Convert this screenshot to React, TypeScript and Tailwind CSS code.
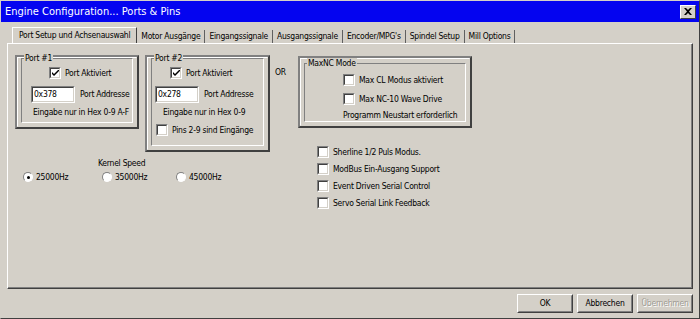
import React from "react";

const font = { fontFamily: '"DejaVu Sans Condensed", "Liberation Sans", sans-serif' };

function CheckBox({ checked = false }: { checked?: boolean }) {
  return (
    <span className="inline-flex h-[12px] w-[12px] shrink-0 border border-t-[#808080] border-l-[#808080] border-r-white border-b-white">
      <span className="flex h-full w-full items-center justify-center border border-t-[#404040] border-l-[#404040] border-r-[#d4d0c8] border-b-[#d4d0c8] bg-white">
        {checked ? (
          <svg width="7" height="7" viewBox="0 0 7 7">
            <path d="M0 2 L0 4 L2 6 L7 1 L7 -1 L2 4 Z" fill="#000" />
          </svg>
        ) : null}
      </span>
    </span>
  );
}

function Check({ label, checked = false }: { label: string; checked?: boolean }) {
  return (
    <label className="flex h-[12px] items-center gap-[4px]">
      <CheckBox checked={checked} />
      <span>{label}</span>
    </label>
  );
}

function Radio({ label, checked = false }: { label: string; checked?: boolean }) {
  return (
    <label className="flex h-[12px] items-center gap-[3px]">
      <span className="flex h-[10px] w-[10px] items-center justify-center rounded-full border border-t-[#808080] border-l-[#808080] border-r-white border-b-white bg-white">
        {checked ? <span className="h-[3px] w-[3px] rounded-full bg-black" /> : null}
      </span>
      <span>{label}</span>
    </label>
  );
}

function Frame({
  title,
  className,
  lineClass,
  children
}: {
  title: string;
  className: string;
  lineClass: string;
  children: React.ReactNode;
}) {
  return (
    <div className={`border-2 border-t-[#808080] border-l-[#808080] border-r-[#404040] border-b-[#404040] ${className}`}>
      <div className="flex h-full flex-col border border-t-white border-l-white border-r-[#d4d0c8] border-b-[#d4d0c8]">
        <div className={`relative mx-[3px] mb-[3px] flex-1 border border-t-[#808080] border-l-[#808080] border-r-white border-b-white ${lineClass}`}>
          <span className="absolute -top-[6px] left-[2px] bg-[#d4d0c8] px-[1px] leading-[11px]">{title}</span>
          {children}
        </div>
      </div>
    </div>
  );
}

function PortInput({ value }: { value: string }) {
  return (
    <div className="h-[17px] w-[44px] shrink-0 border border-t-[#808080] border-l-[#808080] border-r-white border-b-white">
      <div className="flex h-full items-center border border-t-[#404040] border-l-[#404040] border-r-[#d4d0c8] border-b-[#d4d0c8] bg-white pl-[1px]">
        {value}
      </div>
    </div>
  );
}

function Button({ label, disabled = false }: { label: string; disabled?: boolean }) {
  return (
    <div className="h-[19px] w-[56px] border border-t-white border-l-white border-r-[#404040] border-b-[#404040]">
      <div
        className={`flex h-full items-center justify-center border border-t-[#d4d0c8] border-l-[#d4d0c8] border-r-[#808080] border-b-[#808080] ${
          disabled ? "text-[#a09c94] [text-shadow:1px_1px_0_#fff]" : ""
        }`}
      >
        {label}
      </div>
    </div>
  );
}

const tabs = ["Motor Ausgänge", "Eingangssignale", "Ausgangssignale", "Encoder/MPG's", "Spindel Setup", "Mill Options"];

export default function App() {
  return (
    <div
      style={font}
      className="flex h-[319px] w-[700px] flex-col border border-t-[#d4d0c8] border-l-[#d4d0c8] border-r-[#404040] border-b-[#404040] bg-[#d4d0c8] text-[8.5px] leading-[11px] tracking-[-0.25px] whitespace-nowrap text-black"
    >
      <div className="flex h-[21px] items-center justify-between bg-[#0404f0] pl-[4px] pr-[3px]">
        <span className="text-[11px] tracking-normal text-white">Engine Configuration... Ports &amp; Pins</span>
        <span className="flex h-[14px] w-[16px] items-center justify-center border border-t-white border-l-white border-r-[#404040] border-b-[#404040] bg-[#d4d0c8]">
          <svg width="8" height="7" viewBox="0 0 8 7">
            <path d="M0 0 L2 0 L4 2 L6 0 L8 0 L5 3.5 L8 7 L6 7 L4 5 L2 7 L0 7 L3 3.5 Z" fill="#000" />
          </svg>
        </span>
      </div>

      <div className="flex flex-1 flex-col px-[6px] pt-[5px]">
        <div className="flex h-[16px] items-end pl-[5px]">
          <div className="flex h-[16px] items-center border border-b-0 border-t-white border-l-white border-r-[#404040] px-[6px]">
            Port Setup und Achsenauswahl
          </div>
          {tabs.map((t) => (
            <div key={t} className="flex h-[13px] items-center border-r border-r-[#606060] px-[4px]">
              {t}
            </div>
          ))}
        </div>

        <div className="flex h-[246px] border border-t-white border-l-white border-r-[#404040] border-b-[#404040]">
          <div className="flex h-full w-full border-r border-b border-r-[#808080] border-b-[#808080] pl-[7px] pt-[11px]">
            <div className="flex w-[255px] flex-col">
              <div className="flex items-start gap-[6px]">
                <Frame title="Port #1" className="h-[74px] w-[124px]" lineClass="mt-0">
                  <div className="flex flex-col pt-[8px]">
                    <div className="pl-[27px]">
                      <Check label="Port Aktiviert" checked />
                    </div>
                    <div className="mt-[7px] flex items-center gap-[5px] pl-[9px]">
                      <PortInput value="0x378" />
                      <span>Port Addresse</span>
                    </div>
                    <div className="mt-[4px] pl-[11px]">Eingabe nur in Hex 0-9 A-F</div>
                  </div>
                </Frame>
                <Frame title="Port #2" className="h-[97px] w-[125px]" lineClass="mt-0">
                  <div className="flex flex-col pt-[8px]">
                    <div className="pl-[18px]">
                      <Check label="Port Aktiviert" checked />
                    </div>
                    <div className="mt-[7px] flex items-center gap-[5px] pl-[3px]">
                      <PortInput value="0x278" />
                      <span>Port Addresse</span>
                    </div>
                    <div className="mt-[4px] pl-[11px]">Eingabe nur in Hex 0-9</div>
                    <div className="mt-[6px] pl-[4px]">
                      <Check label="Pins 2-9 sind Eingänge" />
                    </div>
                  </div>
                </Frame>
              </div>
              <div className="mt-[6px] pl-[83px]">Kernel Speed</div>
              <div className="mt-[2px] flex pl-[8px]">
                <div className="w-[79px]">
                  <Radio label="25000Hz" checked />
                </div>
                <div className="w-[74px]">
                  <Radio label="35000Hz" />
                </div>
                <Radio label="45000Hz" />
              </div>
            </div>
            <div className="ml-[5px] w-[23px] pt-[12px]">OR</div>
            <div className="flex flex-col">
              <Frame title="MaxNC Mode" className="mt-[1px] h-[72px] w-[174px]" lineClass="mt-[4px]">
                <div className="flex flex-col pl-[38px] pt-[10px]">
                  <Check label="Max CL Modus aktiviert" />
                  <div className="mt-[7px]">
                    <Check label="Max NC-10 Wave Drive" />
                  </div>
                  <div className="mt-[5px]">Programm Neustart erforderlich</div>
                </div>
              </Frame>
              <div className="mt-[18px] flex flex-col gap-[5px] pl-[19px]">
                <Check label="Sherline 1/2 Puls Modus." />
                <Check label="ModBus Ein-Ausgang Support" />
                <Check label="Event Driven Serial Control" />
                <Check label="Servo Serial Link Feedback" />
              </div>
            </div>
          </div>
        </div>

        <div className="mt-[5px] flex justify-end gap-[4px]">
          <Button label="OK" />
          <Button label="Abbrechen" />
          <Button label="Übernehmen" disabled />
        </div>
      </div>
    </div>
  );
}
